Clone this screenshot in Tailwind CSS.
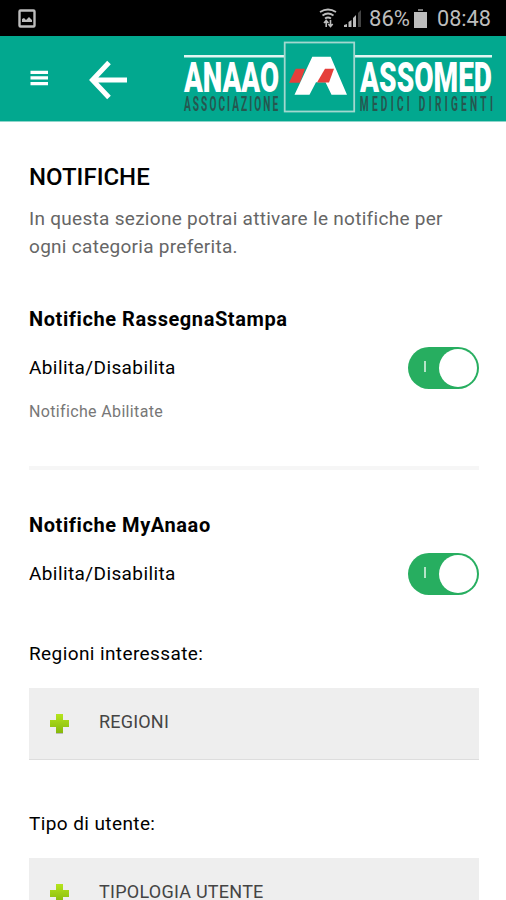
<!DOCTYPE html>
<html lang="it">
<head>
  <meta charset="UTF-8"><meta name="viewport" content="width=device-width,initial-scale=1.0">
  <title>Anaao Assomed - Notifiche</title>
  <script src="https://cdn.jsdelivr.net/npm/@tailwindcss/browser@4"></script>
</head>
<body class="bg-white h-screen overflow-hidden flex flex-col font-['Roboto',sans-serif]">
  <div class="h-9 shrink-0 bg-black flex items-center justify-between pl-[18px] pr-[15px] text-[#bdbdbd]">
    <svg class="w-[18px] h-[19px]" viewBox="0 0 18 19" fill="none">
      <rect x="1.5" y="1.5" width="15" height="16" rx="1" stroke="currentColor" stroke-width="2.400"/>
      <path d="M4 13V10l2-1 2 2 3-3 3 3v2z" fill="currentColor"/>
    </svg>
    <div class="flex items-center">
      <svg class="w-[50px] h-5" viewBox="0 0 50 20" fill="none" stroke="currentColor" stroke-width="1.800">
        <path d="M1 4q8-5 16 0M3.500 7.500q5.500-4 11 0M6 10.500q3-2 6 0"/>
        <path d="M7.200 19v-6M5 15l2.200-2.500L9.400 15M11.500 12v6M9.300 16l2.200 2.500 2.200-2.500" stroke-width="1.600"/>
        <g fill="currentColor" stroke="none">
          <path d="M25 19v-2l3-1v3zM29.500 19v-5l3-2v7zM34 19v-9l3-3v12z"/>
          <path d="M39 19V5l3-3v17z" fill="#444"/>
        </g>
      </svg>
      <svg class="w-[41px] h-6 overflow-visible text-[22px]" viewBox="0 0 41 24"><text x="0" y="20" textLength="41" lengthAdjust="spacingAndGlyphs" fill="currentColor">86%</text></svg>
      <svg class="ml-[4px] w-[13px] h-[19px]" viewBox="0 0 13 19"><path d="M0 3h13v16H0z" fill="currentColor"/><path d="M4 0h5v2H4z" fill="#777"/></svg>
      <svg class="ml-[10px] w-[54px] h-6 overflow-visible text-[22px]" viewBox="0 0 54 24"><text x="0" y="20" textLength="54" lengthAdjust="spacingAndGlyphs" fill="currentColor">08:48</text></svg>
    </div>
  </div>

  <div class="h-[86px] shrink-0 bg-[#02a88f] border-b border-[#8fd5ca] flex items-start">
    <svg class="ml-[30px] mt-[34px] w-[18px] h-4" viewBox="0 0 18 16" fill="#fff"><path d="M.5.700h17.500v3.300H.5zM.5 6.300h17.500v3.300H.5zM.5 12h17.500v3.300H.5z"/></svg>
    <svg class="ml-[41px] mt-6 w-[38px] h-10" viewBox="0 0 38 40" fill="none" stroke="#fff" stroke-width="5"><path d="M20 2.500L3.500 20 20 37.500M3 20h35"/></svg>
    <svg class="ml-[53px] w-[326px] h-[85px] font-['Roboto',sans-serif]" viewBox="180 36 326 85">
      <path d="M184 56.300h100M355 56.300h137" stroke="#e3f5f2" stroke-width="2.600"/>
      <rect x="284.700" y="42.500" width="69.500" height="69" fill="none" stroke="#a3d8cf" stroke-width="1.800"/>
      <path d="M295.700 68.700h9.300l-5 14h-11z" fill="#e53f3b"/>
      <path d="M312.300 56.800h18.400L347 94.800h-15.500l-6-12.500h-9.500L309.500 94.800H294.500z" fill="#fff"/>
      <path d="M325 68.700h9l-5 13.800h-12z" fill="#e53f3b"/>
      <g transform="translate(184 92) scale(1 1.320)" font-size="32" font-weight="900" fill="#fff">
        <text textLength="95" lengthAdjust="spacingAndGlyphs">ANAAO</text>
        <text x="176" textLength="132" lengthAdjust="spacingAndGlyphs">ASSOMED</text>
      </g>
      <g transform="translate(184 110.500) scale(.52 1)" font-size="19.500" font-weight="700" fill="#26574f">
        <text textLength="181">ASSOCIAZIONE</text>
        <text x="338" textLength="256">MEDICI DIRIGENTI</text>
      </g>
    </svg>
  </div>

  <main class="pl-[29px] pr-[27px] pt-[39px] text-black">
    <h1 class="text-[24px] leading-8 font-medium w-max">NOTIFICHE</h1>
    <p class="mt-3 text-[19px] leading-7 text-[#666] tracking-[0.290px] whitespace-nowrap">In questa sezione potrai attivare le notifiche per<br>ogni categoria preferita.</p>

    <h2 class="mt-11 text-[20px] leading-7 font-bold tracking-[0.580px]">Notifiche RassegnaStampa</h2>
    <div class="mt-[14px] h-[42px] flex items-center justify-between">
      <span class="text-[19px] tracking-[0.400px]">Abilita/Disabilita</span>
      <div class="w-[71px] h-[42px] rounded-full bg-[#27ae60] flex items-center justify-between pl-4 pr-[2px]">
        <span class="w-[2px] h-[11px] bg-[#b5e4c8] -mt-1"></span>
        <span class="size-[38px] rounded-full bg-white"></span>
      </div>
    </div>
    <p class="mt-[11px] text-base leading-6 text-[#777] tracking-[0.350px]">Notifiche Abilitate</p>
    <hr class="mt-[42px] border-0 h-1 bg-[#f6f6f6]">

    <h2 class="mt-[41px] text-[20px] leading-7 font-bold tracking-[0.580px]">Notifiche MyAnaao</h2>
    <div class="mt-[14px] h-[42px] flex items-center justify-between">
      <span class="text-[19px] tracking-[0.400px]">Abilita/Disabilita</span>
      <div class="w-[71px] h-[42px] rounded-full bg-[#27ae60] flex items-center justify-between pl-4 pr-[2px]">
        <span class="w-[2px] h-[11px] bg-[#b5e4c8] -mt-1"></span>
        <span class="size-[38px] rounded-full bg-white"></span>
      </div>
    </div>

    <h3 class="mt-[45px] text-[19px] leading-7 tracking-[0.400px]">Regioni interessate:</h3>
    <div class="mt-5 h-[72px] bg-[#eee] border-b border-[#ddd] flex items-center pl-5 text-[#444]">
      <svg class="w-[21px] h-[21px]" viewBox="0 0 21 21">
        <defs><linearGradient id="plus" x2="0" y2="1"><stop stop-color="#b5e51c"/><stop offset="1" stop-color="#86b80c"/></linearGradient></defs>
        <path d="M7 20.500h7" stroke="#bbb"/>
        <path d="M7 1h7v6h6v7h-6v6H7v-6H1V7h6z" fill="url(#plus)"/>
      </svg>
      <span class="ml-[29px] -mt-1 text-[18px] tracking-[0.200px]">REGIONI</span>
    </div>

    <h3 class="mt-[50px] text-[19px] leading-7 tracking-[0.400px]">Tipo di utente:</h3>
    <div class="mt-5 h-[72px] bg-[#eee] border-b border-[#ddd] flex items-center pl-5 text-[#444]">
      <svg class="w-[21px] h-[21px]" viewBox="0 0 21 21">
        <path d="M7 1h7v6h6v7h-6v6H7v-6H1V7h6z" fill="url(#plus)"/>
      </svg>
      <span class="ml-[29px] -mt-1 text-[18px] tracking-[0.250px]">TIPOLOGIA UTENTE</span>
    </div>
  </main>
</body>
</html>
